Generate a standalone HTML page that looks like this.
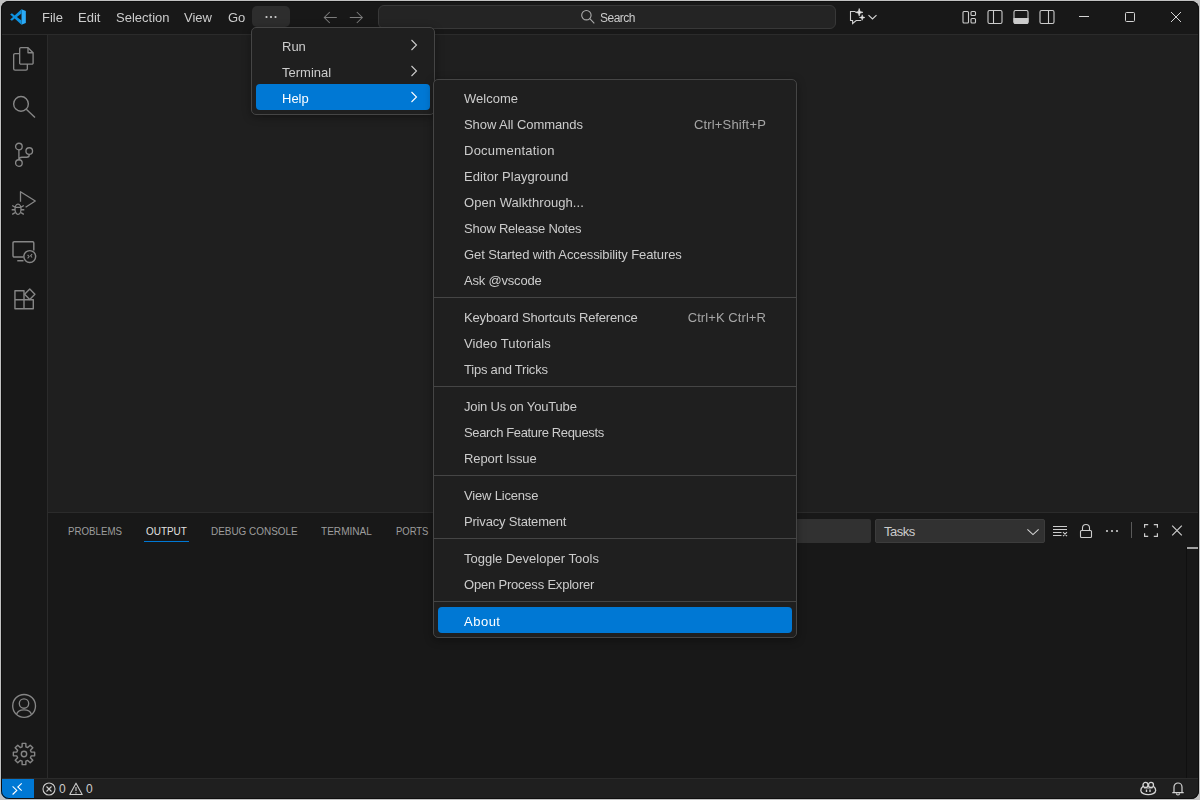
<!DOCTYPE html>
<html>
<head>
<meta charset="utf-8">
<title>Visual Studio Code</title>
<style>
*{box-sizing:border-box;margin:0;padding:0}
html,body{width:1200px;height:800px;overflow:hidden;background:#c2c2c2}
body{font-family:"Liberation Sans",sans-serif;font-size:13px;color:#cccccc;position:relative}
.abs{position:absolute}
#win{position:absolute;left:1px;top:1px;width:1198px;height:798px;background:#181818;border-radius:8px;overflow:hidden}
#in{position:absolute;left:-1px;top:-1px;width:1200px;height:800px}
#titlebar{will-change:transform;position:absolute;left:0;top:0;width:1200px;height:35px;background:#181818;border-bottom:1px solid #2b2b2b}
#activity{position:absolute;left:0;top:35px;width:48px;height:743px;background:#181818;border-right:1px solid #2b2b2b}
#editor{position:absolute;left:48px;top:35px;width:1152px;height:477px;background:#1f1f1f;border-bottom:0}
#panel{position:absolute;left:48px;top:512px;width:1152px;height:266px;background:#181818;border-top:1px solid #2b2b2b}
#status{position:absolute;left:0;top:778px;width:1200px;height:22px;background:#1f1f1f;border-top:1px solid #2b2b2b;font-size:12px}
.t{position:absolute;white-space:nowrap;line-height:16px}
.mi{position:absolute;top:10px;font-size:13px;line-height:16px;color:#cccccc;white-space:nowrap}
svg{position:absolute;overflow:visible}
.menu{will-change:transform;position:absolute;background:#1f1f1f;border:1px solid #454545;border-radius:5px;box-shadow:0 2px 8px rgba(0,0,0,0.36)}
.it{position:absolute;height:26px;line-height:26px;padding-top:2px;font-size:13px;color:#cccccc;white-space:nowrap}
.it .k{position:absolute;right:0;top:2px;color:#a6a6a6}
.sep{position:absolute;height:1px;background:#454545}
.hl{position:absolute;background:#0078d4;border-radius:4px}
</style>
</head>
<body>
<div id="win"><div id="in">
  <div id="titlebar">
    <svg style="left:10px;top:9px" width="16" height="16" viewBox="0 0 100 100">
      <path d="M72 1L99 13V87L72 99Z" fill="#2aaaf6"/>
      <path d="M72 1V28L43 50L72 72V99L29 60L12 74L1 66L19 50L1 34L12 26L29 40Z" fill="#0e92e0"/>
    </svg>
    <div class="mi" style="left:42px">File</div>
    <div class="mi" style="left:78px">Edit</div>
    <div class="mi" style="left:116px">Selection</div>
    <div class="mi" style="left:184px">View</div>
    <div class="mi" style="left:228px">Go</div>
    <div class="abs" style="left:252px;top:6px;width:38px;height:21px;background:#2d2d2d;border-radius:5px"></div>
    <svg style="left:263px;top:9px" width="16" height="16" viewBox="0 0 16 16"><g fill="#d0d0d0"><circle cx="3.5" cy="8" r="1.1"/><circle cx="8" cy="8" r="1.1"/><circle cx="12.5" cy="8" r="1.1"/></g></svg>
    <svg style="left:322px;top:9px" width="16" height="16" viewBox="0 0 16 16"><path d="M14.800 8.500H2.800M7.800 3L2.300 8.500L7.800 14" fill="none" stroke="#7c7c7c" stroke-width="1.050"/></svg>
    <svg style="left:348px;top:9px" width="16" height="16" viewBox="0 0 16 16"><path d="M1.800 8.500H13.800M8.800 3L14.300 8.500L8.800 14" fill="none" stroke="#7c7c7c" stroke-width="1.050"/></svg>
    <div class="abs" style="left:378px;top:5px;width:458px;height:24px;background:#242424;border:1px solid #383838;border-radius:6px"></div>
    <svg style="left:580px;top:9px" width="16" height="16" viewBox="0 0 16 16"><circle cx="6.400" cy="6.200" r="4.700" fill="none" stroke="#ababab" stroke-width="1.100"/><path d="M9.800 9.700L14.300 14.300" stroke="#ababab" stroke-width="1.100"/></svg>
    <div class="mi" style="left:600px;font-size:12px;letter-spacing:-0.5px">Search</div>
    <svg style="left:849px;top:9px" width="16" height="16" viewBox="0 0 16 16" fill="none" stroke="#d0d0d0" stroke-width="1.100">
      <path d="M6.500 2.500H1.500V11.500H3.600V14.500L7.200 11.500H12.200"/>
      <path d="M10.20 -0.50L11.06 2.44L14.00 3.30L11.06 4.16L10.20 7.10L9.34 4.16L6.40 3.30L9.34 2.44Z" fill="#e4e4e4" stroke="#e4e4e4" stroke-width="0.600" stroke-linejoin="round"/>
      <path d="M13.20 5.70L13.83 7.87L16.00 8.50L13.83 9.13L13.20 11.30L12.57 9.13L10.40 8.50L12.57 7.87Z" fill="#e4e4e4" stroke="#e4e4e4" stroke-width="0.500" stroke-linejoin="round"/>
    </svg>
    <svg style="left:868px;top:13px" width="9" height="8" viewBox="0 0 9 8"><path d="M0.500 2.200L4.500 6L8.500 2.200" fill="none" stroke="#d4d4d4" stroke-width="1.150"/></svg>
    <svg style="left:961px;top:9px" width="16" height="16" viewBox="0 0 16 16" fill="none" stroke="#cccccc" stroke-width="1.1">
      <rect x="2" y="2.5" width="5.5" height="11.5" rx="1"/><rect x="10" y="2.5" width="4.5" height="4" rx="1"/><rect x="10" y="9.5" width="4.5" height="4.5" rx="1"/>
    </svg>
    <svg style="left:987px;top:9px" width="16" height="16" viewBox="0 0 16 16" fill="none" stroke="#cccccc" stroke-width="1.1">
      <rect x="1" y="1.5" width="14" height="13" rx="1.5"/><path d="M6.5 1.5V14.5"/>
    </svg>
    <svg style="left:1013px;top:9px" width="16" height="16" viewBox="0 0 16 16" fill="none" stroke="#cccccc" stroke-width="1.1">
      <rect x="1" y="1.5" width="14" height="13" rx="1.5"/><path d="M1 9.5H15V13A1.5 1.5 0 0 1 13.5 14.5H2.5A1.5 1.5 0 0 1 1 13Z" fill="#cccccc"/>
    </svg>
    <svg style="left:1039px;top:9px" width="16" height="16" viewBox="0 0 16 16" fill="none" stroke="#cccccc" stroke-width="1.1">
      <rect x="1" y="1.5" width="14" height="13" rx="1.5"/><path d="M9.5 1.5V14.5"/>
    </svg>
    <svg style="left:1079px;top:12px" width="10" height="10" viewBox="0 0 10 10"><path d="M0 4.5H10" stroke="#d4d4d4" stroke-width="1"/></svg>
    <svg style="left:1125px;top:12px" width="10" height="10" viewBox="0 0 10 10"><rect x="0.5" y="0.5" width="9" height="9" rx="1" fill="none" stroke="#d4d4d4" stroke-width="1"/></svg>
    <svg style="left:1171px;top:12px" width="10" height="10" viewBox="0 0 10 10"><path d="M0 0L10 10M10 0L0 10" stroke="#d4d4d4" stroke-width="1"/></svg>
  </div>
  <div id="activity">
    <!-- files -->
    <svg style="left:12px;top:12px" width="24" height="24" viewBox="0 0 24 24" fill="none" stroke="#868686" stroke-width="1.350" stroke-linejoin="round">
      <path d="M16 0.650H8.850A1.200 1.200 0 0 0 7.650 1.850V15.900A1.200 1.200 0 0 0 8.850 17.100H19.900A1.200 1.200 0 0 0 21.100 15.900V5.750Z"/>
      <path d="M16 0.650V5.750H21.100"/>
      <path d="M7.650 6.650H3.050A1.400 1.400 0 0 0 1.650 8.050V21.700A1.400 1.400 0 0 0 3.050 23.100H13.950A1.400 1.400 0 0 0 15.350 21.700V17.100"/>
    </svg>
    <!-- search -->
    <svg style="left:12px;top:60px" width="24" height="24" viewBox="0 0 24 24" fill="none" stroke="#868686" stroke-width="1.400">
      <circle cx="9" cy="8.900" r="7.350"/><path d="M14.300 14.200L23 22.500"/>
    </svg>
    <!-- scm -->
    <svg style="left:12px;top:108px" width="24" height="24" viewBox="0 0 24 24" fill="none" stroke="#868686" stroke-width="1.350">
      <circle cx="6.900" cy="3.500" r="3.300"/><circle cx="6.900" cy="20" r="3.300"/><circle cx="17.250" cy="8" r="3.300"/>
      <path d="M6.900 6.800V16.700M17.250 11.300V11.700A2.500 2.500 0 0 1 14.750 14.200H10A3.100 3.100 0 0 0 6.900 17.300"/>
    </svg>
    <!-- debug -->
    <svg style="left:12px;top:156px" width="24" height="24" viewBox="0 0 24 24" fill="none" stroke="#868686" stroke-width="1.300" stroke-linejoin="round">
      <path d="M8.500 10.700V0.700L23.300 10L13.600 16.200"/>
      <ellipse cx="6" cy="18.250" rx="3" ry="5.100"/>
      <path d="M3.200 16.300H8.800M0.200 14.500L2.900 16.100M-0.300 18.750H3M0.200 23.400L3 21.600M11.800 14.500L9.100 16.100M12.300 18.750H9M11.800 23.400L9 21.600"/>
    </svg>
    <!-- remote explorer -->
    <svg style="left:12px;top:204px" width="26" height="24" viewBox="0 0 26 24" fill="none" stroke="#868686" stroke-width="1.450">
      <path d="M11.500 18H2.200A1.200 1.200 0 0 1 1 16.800V3.900A1.200 1.200 0 0 1 2.200 2.700H20.600A1.200 1.200 0 0 1 21.800 3.900V11.500"/>
      <path d="M5.250 21.750H11.500"/>
      <circle cx="17.750" cy="17.500" r="5.900"/>
      <path d="M15.600 15.900L17.100 17.600L15.600 19.300M20.100 15.100L18.600 16.800L20.100 18.500" stroke-width="1.050"/>
    </svg>
    <!-- extensions -->
    <svg style="left:12px;top:252px" width="24" height="24" viewBox="0 0 24 24" fill="none" stroke="#868686" stroke-width="1.400" stroke-linejoin="round">
      <path d="M2.950 3.700H12V21.800H2.950ZM2.950 12.750H21.300V21.800H12"/>
      <path d="M17.750 2.100L22.900 7.250L17.750 12.400L12.600 7.250Z"/>
    </svg>
    <!-- account -->
    <svg style="left:12px;top:659px" width="24" height="24" viewBox="0 0 24 24" fill="none" stroke="#868686" stroke-width="1.350">
      <circle cx="12.100" cy="11.900" r="11.400"/><circle cx="12" cy="9.500" r="4.700"/>
      <path d="M4.600 20.400C5.500 17 8.500 15.800 12 15.800S18.500 17 19.400 20.400"/>
    </svg>
    <!-- gear -->
    <svg style="left:12px;top:707px" width="24" height="24" viewBox="0 0 24 24" fill="none" stroke="#868686" stroke-width="1.4" stroke-linejoin="round">
      <circle cx="12" cy="12" r="2.700"/>
      <path d="M10.10 4.85L10.17 1.36L13.83 1.36L13.90 4.85L15.71 5.60L18.23 3.18L20.82 5.77L18.40 8.29L19.15 10.10L22.64 10.17L22.64 13.83L19.15 13.90L18.40 15.71L20.82 18.23L18.23 20.82L15.71 18.40L13.90 19.15L13.83 22.64L10.17 22.64L10.10 19.15L8.29 18.40L5.77 20.82L3.18 18.23L5.60 15.71L4.85 13.90L1.36 13.83L1.36 10.17L4.85 10.10L5.60 8.29L3.18 5.77L5.77 3.18L8.29 5.60Z"/>
    </svg>
  </div>
  <div id="editor"></div>
  <div id="panel"><div class="abs" style="left:0;top:1px;width:1152px;height:264px">
    <div class="t" style="left:20px;top:9px;font-size:11px;color:#9d9d9d;transform:scaleX(0.883);transform-origin:0 0">PROBLEMS</div>
    <div class="t" style="left:98px;top:9px;font-size:11px;color:#e0e0e0;transform:scaleX(0.902);transform-origin:0 0">OUTPUT</div>
    <div class="abs" style="left:96px;top:27px;width:45px;height:1px;background:#0078d4"></div>
    <div class="t" style="left:163px;top:9px;font-size:11px;color:#9d9d9d;transform:scaleX(0.903);transform-origin:0 0">DEBUG CONSOLE</div>
    <div class="t" style="left:273px;top:9px;font-size:11px;color:#9d9d9d;transform:scaleX(0.915);transform-origin:0 0">TERMINAL</div>
    <div class="t" style="left:348px;top:9px;font-size:11px;color:#9d9d9d;transform:scaleX(0.860);transform-origin:0 0">PORTS</div>
    <div class="abs" style="left:600px;top:5px;width:223px;height:24px;background:#313131;border-radius:2px"></div>
    <div class="abs" style="left:827px;top:5px;width:170px;height:24px;background:#313131;border:1px solid #3c3c3c;border-radius:2px"></div>
    <div class="t" style="left:836px;top:10px;font-size:13px;color:#cccccc;letter-spacing:-0.5px">Tasks</div>
    <svg style="left:978px;top:12px" width="14" height="12" viewBox="0 0 14 12"><path d="M1.400 3.300L7 8.600L12.600 3.300" fill="none" stroke="#d4d4d4" stroke-width="1.100"/></svg>
    <!-- clear output -->
    <svg style="left:1004px;top:9px" width="16" height="16" viewBox="0 0 16 16" fill="none" stroke="#cccccc" stroke-width="1.100">
      <path d="M1 3.500H15M1 6.500H15M1 9.500H9.500M1 12.500H9.500M11 9.200L15 13.200M15 9.200L11 13.200"/>
    </svg>
    <!-- lock -->
    <svg style="left:1030px;top:9px" width="16" height="16" viewBox="0 0 16 16" fill="none" stroke="#cccccc" stroke-width="1.100">
      <rect x="2.500" y="7.500" width="11" height="7" rx="1"/><path d="M4.500 7.500V5A3.500 3.500 0 0 1 11.500 5V7.500"/>
    </svg>
    <!-- more -->
    <svg style="left:1056px;top:9px" width="16" height="16" viewBox="0 0 16 16"><g fill="#cccccc"><circle cx="3" cy="8" r="1.100"/><circle cx="8" cy="8" r="1.100"/><circle cx="13" cy="8" r="1.100"/></g></svg>
    <div class="abs" style="left:1083px;top:8px;width:1px;height:16px;background:#5a5a5a"></div>
    <!-- maximize -->
    <svg style="left:1095px;top:9px" width="16" height="16" viewBox="0 0 16 16" fill="none" stroke="#cccccc" stroke-width="1.200">
      <path d="M1.600 4.800V1.600H5.200M10.800 1.600H14.400V4.800M14.400 10.200V13.400H10.800M5.200 13.400H1.600V10.200"/>
    </svg>
    <!-- close -->
    <svg style="left:1121px;top:9px" width="16" height="16" viewBox="0 0 16 16"><path d="M3.200 2.700L12.800 12.300M12.800 2.700L3.200 12.300" fill="none" stroke="#cccccc" stroke-width="1.200"/></svg>
    <div class="abs" style="left:1138px;top:33px;width:1px;height:232px;background:#101010"></div>
    <div class="abs" style="left:1139px;top:33px;width:13px;height:2px;background:#a0a0a0"></div>
  </div></div>
<!--MENUS--><div class="menu" style="left:251px;top:27px;width:184px;height:88px">
    <div class="it" style="left:30px;top:4px">Run</div>
    <div class="it" style="left:30px;top:30px">Terminal</div>
    <div class="hl" style="left:4px;top:56px;width:174px;height:26px"></div>
    <div class="it" style="left:30px;top:56px;color:#ffffff">Help</div>
    <svg style="left:158px;top:11px" width="8" height="12" viewBox="0 0 8 12"><path d="M1.500 1L6.500 6L1.500 11" fill="none" stroke="#cccccc" stroke-width="1.100"/></svg><svg style="left:158px;top:37px" width="8" height="12" viewBox="0 0 8 12"><path d="M1.500 1L6.500 6L1.500 11" fill="none" stroke="#cccccc" stroke-width="1.100"/></svg><svg style="left:158px;top:63px" width="8" height="12" viewBox="0 0 8 12"><path d="M1.500 1L6.500 6L1.500 11" fill="none" stroke="#ffffff" stroke-width="1.100"/></svg>
  </div>
  <div class="menu" style="left:433px;top:79px;width:364px;height:559px">
    <div class="it" style="left:30px;top:4px;width:302px"><span style="letter-spacing:0.000px">Welcome</span></div>
    <div class="it" style="left:30px;top:30px;width:302px"><span style="letter-spacing:-0.062px">Show All Commands</span><span class="k" style="letter-spacing:0.167px">Ctrl+Shift+P</span></div>
    <div class="it" style="left:30px;top:56px;width:302px"><span style="letter-spacing:0.250px">Documentation</span></div>
    <div class="it" style="left:30px;top:82px;width:302px"><span style="letter-spacing:0.062px">Editor Playground</span></div>
    <div class="it" style="left:30px;top:108px;width:302px"><span style="letter-spacing:0.056px">Open Walkthrough...</span></div>
    <div class="it" style="left:30px;top:134px;width:302px"><span style="letter-spacing:-0.235px">Show Release Notes</span></div>
    <div class="it" style="left:30px;top:160px;width:302px"><span style="letter-spacing:-0.105px">Get Started with Accessibility Features</span></div>
    <div class="it" style="left:30px;top:186px;width:302px"><span style="letter-spacing:-0.200px">Ask @vscode</span></div>
    <div class="sep" style="left:0;top:217px;width:362px"></div>
    <div class="it" style="left:30px;top:223px;width:302px"><span style="letter-spacing:-0.148px">Keyboard Shortcuts Reference</span><span class="k" style="letter-spacing:0.077px">Ctrl+K Ctrl+R</span></div>
    <div class="it" style="left:30px;top:249px;width:302px"><span style="letter-spacing:0.071px">Video Tutorials</span></div>
    <div class="it" style="left:30px;top:275px;width:302px"><span style="letter-spacing:-0.214px">Tips and Tricks</span></div>
    <div class="sep" style="left:0;top:306px;width:362px"></div>
    <div class="it" style="left:30px;top:312px;width:302px"><span style="letter-spacing:-0.176px">Join Us on YouTube</span></div>
    <div class="it" style="left:30px;top:338px;width:302px"><span style="letter-spacing:-0.364px">Search Feature Requests</span></div>
    <div class="it" style="left:30px;top:364px;width:302px"><span style="letter-spacing:-0.091px">Report Issue</span></div>
    <div class="sep" style="left:0;top:395px;width:362px"></div>
    <div class="it" style="left:30px;top:401px;width:302px"><span style="letter-spacing:-0.182px">View License</span></div>
    <div class="it" style="left:30px;top:427px;width:302px"><span style="letter-spacing:-0.188px">Privacy Statement</span></div>
    <div class="sep" style="left:0;top:458px;width:362px"></div>
    <div class="it" style="left:30px;top:464px;width:302px"><span style="letter-spacing:0.000px">Toggle Developer Tools</span></div>
    <div class="it" style="left:30px;top:490px;width:302px"><span style="letter-spacing:-0.200px">Open Process Explorer</span></div>
    <div class="sep" style="left:0;top:521px;width:362px"></div>
    <div class="hl" style="left:4px;top:527px;width:354px;height:26px"></div>
    <div class="it" style="left:30px;top:527px;width:302px;color:#ffffff"><span style="letter-spacing:0.500px">About</span></div>
  </div><!--/MENUS-->
  <div id="status">
    <div class="abs" style="left:0;top:0;width:34px;height:21px;background:#0078d4"></div>
    <svg style="left:9px;top:3px" width="16" height="16" viewBox="0 0 16 16" fill="none" stroke="#ffffff" stroke-width="1.100">
      <path d="M3.600 4.400L7.800 8.400L3.600 12.500M12.700 1.300L8.800 5L12.700 8.700"/>
    </svg>
    <svg style="left:42px;top:3px" width="14" height="14" viewBox="0 0 14 14" fill="none" stroke="#cccccc" stroke-width="1.100">
      <circle cx="7" cy="7" r="6"/><path d="M4.500 4.500L9.500 9.500M9.500 4.500L4.500 9.500"/>
    </svg>
    <div class="t" style="left:59px;top:2px;font-size:12px;color:#cccccc">0</div>
    <svg style="left:69px;top:3px" width="14" height="14" viewBox="0 0 14 14" fill="none" stroke="#cccccc" stroke-width="1.100" stroke-linejoin="round">
      <path d="M7 1.200L13.200 12.500H0.800Z"/><path d="M7 5V9M7 10.200V11.400"/>
    </svg>
    <div class="t" style="left:86px;top:2px;font-size:12px;color:#cccccc">0</div>
    <!-- copilot -->
    <svg style="left:1140px;top:2px" width="17" height="15" viewBox="0 0 17 15" fill="none" stroke="#d4d4d4" stroke-width="1.300">
      <circle cx="5.500" cy="3.900" r="2.500"/><circle cx="11" cy="3.900" r="2.500"/>
      <path d="M3.100 5.200C1.200 6.500 0.800 8 0.800 9.500C0.800 12.200 5 13.600 8.250 13.600S15.700 12.200 15.700 9.500C15.700 8 15.300 6.500 13.400 5.200"/>
      <path d="M4 7H12.500" stroke-width="0.900"/>
      <path d="M6.500 8.500V11M10 8.500V11" stroke-width="1.400"/>
    </svg>
    <!-- bell -->
    <svg style="left:1171px;top:2px" width="14" height="15" viewBox="0 0 14 15" fill="none" stroke="#d4d4d4" stroke-width="1.200">
      <path d="M3 11.500V6A4 4 0 0 1 11 6V11.500M1.300 11.700H12.700M5.500 12.500A1.500 1.500 0 0 0 8.500 12.500"/>
    </svg>
  </div>
</div><div style="position:absolute;left:0;top:0;width:1198px;height:798px;border-radius:8px;box-shadow:inset 0 0 0 1px #0f0f0f"></div></div>
</body>
</html>
